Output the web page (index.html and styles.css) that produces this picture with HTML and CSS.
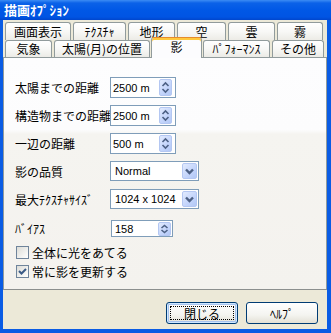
FILE: index.html
```html
<!DOCTYPE html>
<html lang="ja">
<head>
    <meta charset="UTF-8">
    <title>描画ｵﾌﾟｼｮﾝ</title>
    <link rel="stylesheet" href="styles.css">
</head>
<body>
    <div class="window">
        <div class="titlebar">描画ｵﾌﾟｼｮﾝ</div>
        <div class="client">
            <div class="tabs">
                <div class="tab-row back">
                    <div class="tab">画面表示</div>
                    <div class="tab">ﾃｸｽﾁｬ</div>
                    <div class="tab">地形</div>
                    <div class="tab">空</div>
                    <div class="tab">雲</div>
                    <div class="tab">霧</div>
                </div>
                <div class="tab-row front">
                    <div class="tab">気象</div>
                    <div class="tab">太陽(月)の位置</div>
                    <div class="tab active">影</div>
                    <div class="tab">ﾊﾟﾌｫｰﾏﾝｽ</div>
                    <div class="tab">その他</div>
                </div>
            </div>

            <div class="pane">
                <div class="field">
                    <label>太陽までの距離</label>
                    <div class="spin">
                        <span class="value">2500 m</span>
                        <span class="spin-btn"><svg width="11" height="15" viewBox="0 0 11 15"><path d="M2.5 6 L5.5 3 L8.5 6 M2.5 9 L5.5 12 L8.5 9"/></svg></span>
                    </div>
                </div>
                <div class="field">
                    <label>構造物までの距離</label>
                    <div class="spin">
                        <span class="value">2500 m</span>
                        <span class="spin-btn"><svg width="11" height="15" viewBox="0 0 11 15"><path d="M2.5 6 L5.5 3 L8.5 6 M2.5 9 L5.5 12 L8.5 9"/></svg></span>
                    </div>
                </div>
                <div class="field">
                    <label>一辺の距離</label>
                    <div class="spin">
                        <span class="value">500 m</span>
                        <span class="spin-btn"><svg width="11" height="15" viewBox="0 0 11 15"><path d="M2.5 6 L5.5 3 L8.5 6 M2.5 9 L5.5 12 L8.5 9"/></svg></span>
                    </div>
                </div>
                <div class="field">
                    <label>影の品質</label>
                    <div class="combo">
                        <span class="value">Normal</span>
                        <span class="drop-btn"><svg width="13" height="14" viewBox="0 0 13 14"><path d="M3 5.5 L6.5 9 L10 5.5"/></svg></span>
                    </div>
                </div>
                <div class="field">
                    <label>最大ﾃｸｽﾁｬｻｲｽﾞ</label>
                    <div class="combo">
                        <span class="value">1024 x 1024</span>
                        <span class="drop-btn"><svg width="13" height="14" viewBox="0 0 13 14"><path d="M3 5.5 L6.5 9 L10 5.5"/></svg></span>
                    </div>
                </div>
                <div class="field small">
                    <label>ﾊﾞｲｱｽ</label>
                    <div class="spin bias">
                        <span class="value">158</span>
                        <span class="spin-btn"><svg width="11" height="12" viewBox="0 0 11 12"><path d="M2.5 5 L5.5 2.5 L8.5 5 M2.5 7 L5.5 9.5 L8.5 7"/></svg></span>
                    </div>
                </div>

                <div class="check first">
                    <span class="box"></span>
                    <span>全体に光をあてる</span>
                </div>
                <div class="check">
                    <span class="box"><svg width="11" height="11" viewBox="0 0 11 11"><path d="M2 5 L4.5 7.5 L9 3"/></svg></span>
                    <span>常に影を更新する</span>
                </div>
            </div>

            <div class="buttons">
                <button class="btn default" type="button"><span class="focus"></span>閉じる</button>
                <button class="btn" type="button">ﾍﾙﾌﾟ</button>
            </div>
        </div>
    </div>
</body>
</html>
```

FILE: styles.css
```css
/* Basic page */
body {
    margin: 0;
    font-family: "Noto Sans CJK JP", sans-serif;
    font-size: 12px;
    color: #000;
    background: #fff;
}

/* Window frame */
.window {
    width: 331px;
    height: 333px;
    display: flex;
    flex-direction: column;
}

.titlebar {
    height: 20px;
    padding-left: 4px;
    line-height: 20px;
    color: #fff;
    font-size: 13px;
    font-weight: bold;
    background: linear-gradient(#3c8cf4 0, #0b62e8 3px, #0058e6 50%, #0054e3 85%, #0046cc 100%);
}

.client {
    flex: 1;
    display: flex;
    flex-direction: column;
    padding-top: 2px;
    background: #ece9d8;
    border-style: solid;
    border-color: #0a5ce4;
    border-width: 0 4px 4px 3px;
}

/* Tabs */
.tab-row {
    display: grid;
    column-gap: 2px;
    padding-left: 2px;
}

.tab-row.back {
    grid-template-columns: 66px 53px 47px 49px 47px 46px;
    height: 18px;
}

.tab-row.front {
    grid-template-columns: 47px 96px 49px 67px 52px;
    height: 17px;
}

.tab {
    box-sizing: border-box;
    border: 1px solid #919b9c;
    border-bottom: none;
    border-radius: 3px 3px 0 0;
    background: linear-gradient(#fff, #f8f8f6 50%, #ecebe6);
    text-align: center;
    line-height: 16px;
    white-space: nowrap;
}

.tab-row.back .tab {
    padding-top: 1px;
}

.tab.active {
    position: relative;
    z-index: 1;
    margin: -3px -1px -1px;
    border-top: 1px solid #e68b2c;
    box-shadow: inset 0 2px 0 #ffc83c;
    background: #fcfcfe;
    padding-top: 2px;
    line-height: 14px;
}

/* Tab page */
.pane {
    height: 233px;
    box-sizing: border-box;
    padding: 19px 11px 0;
    border: 1px solid #919b9c;
    border-bottom-color: #8c8f8e;
    background: linear-gradient(#fdfdfe, #fcfcfd 31%, #f5f4f0 33%, #f4f2ee);
}

.field {
    display: flex;
    align-items: flex-start;
    height: 21px;
    margin-bottom: 7px;
}

.field label {
    width: 95px;
    line-height: 21px;
    white-space: nowrap;
}

.field.small {
    height: 17px;
    margin-top: 10px;
    margin-bottom: 0;
}

.field.small label {
    line-height: 17px;
}

.value {
    font-family: "Liberation Sans", Arial, sans-serif;
    font-size: 11px;
    padding-left: 2px;
}

.spin,
.combo {
    box-sizing: border-box;
    display: flex;
    align-items: center;
    border: 1px solid #7f9db9;
    background: #fff;
}

.spin {
    width: 66px;
    height: 21px;
}

.spin.bias {
    width: 62px;
    height: 17px;
    margin-left: 1px;
}

.spin.bias .value {
    padding-left: 3px;
}

.combo {
    width: 89px;
    height: 20px;
}

.combo .value {
    padding-left: 4px;
}

.spin-btn,
.drop-btn {
    display: flex;
    align-items: center;
    justify-content: center;
    margin-left: auto;
    box-sizing: border-box;
    border: 1px solid #b4c7f2;
    border-radius: 2px;
    background: linear-gradient(135deg, #e2ebfe, #c3d4fb 60%, #b3c8f5);
}

.spin-btn {
    width: 13px;
    height: 17px;
    margin-right: 3px;
}

.spin.bias .spin-btn {
    height: 14px;
    margin-right: 1px;
}

.drop-btn {
    width: 15px;
    height: 16px;
    margin-right: 1px;
}

.spin-btn path {
    fill: none;
    stroke: #4d6185;
    stroke-width: 1.6;
}

.drop-btn path {
    fill: none;
    stroke: #4d6185;
    stroke-width: 2.4;
}

/* Check boxes */
.check {
    display: flex;
    align-items: center;
    height: 19px;
    white-space: nowrap;
}

.check.first {
    margin-top: 6px;
}

.check .box {
    box-sizing: border-box;
    display: flex;
    align-items: center;
    justify-content: center;
    width: 13px;
    height: 13px;
    margin-left: 1px;
    margin-right: 3px;
    border: 1px solid #6f849b;
    background: linear-gradient(135deg, #dcdcd7, #fff);
}

.check .box path {
    fill: none;
    stroke: #3a5a86;
    stroke-width: 2;
}

/* Dialog buttons */
.buttons {
    display: flex;
    justify-content: flex-end;
    gap: 8px;
    padding: 12px 9px 0 0;
}

.btn {
    position: relative;
    width: 72px;
    height: 22px;
    padding: 0;
    border: 1px solid #003c74;
    border-radius: 3px;
    background: linear-gradient(#fff, #f4f4f0 60%, #e3e0d5);
    font-family: "Noto Sans CJK JP", sans-serif;
    font-size: 12px;
    color: #000;
}

.btn.default {
    box-shadow: inset 0 0 0 1px #cee7ff, inset 0 0 0 2px #a7c3ee;
}

.btn .focus {
    position: absolute;
    top: 3px;
    left: 3px;
    right: 3px;
    bottom: 3px;
    border: 1px dotted #000;
}
```
